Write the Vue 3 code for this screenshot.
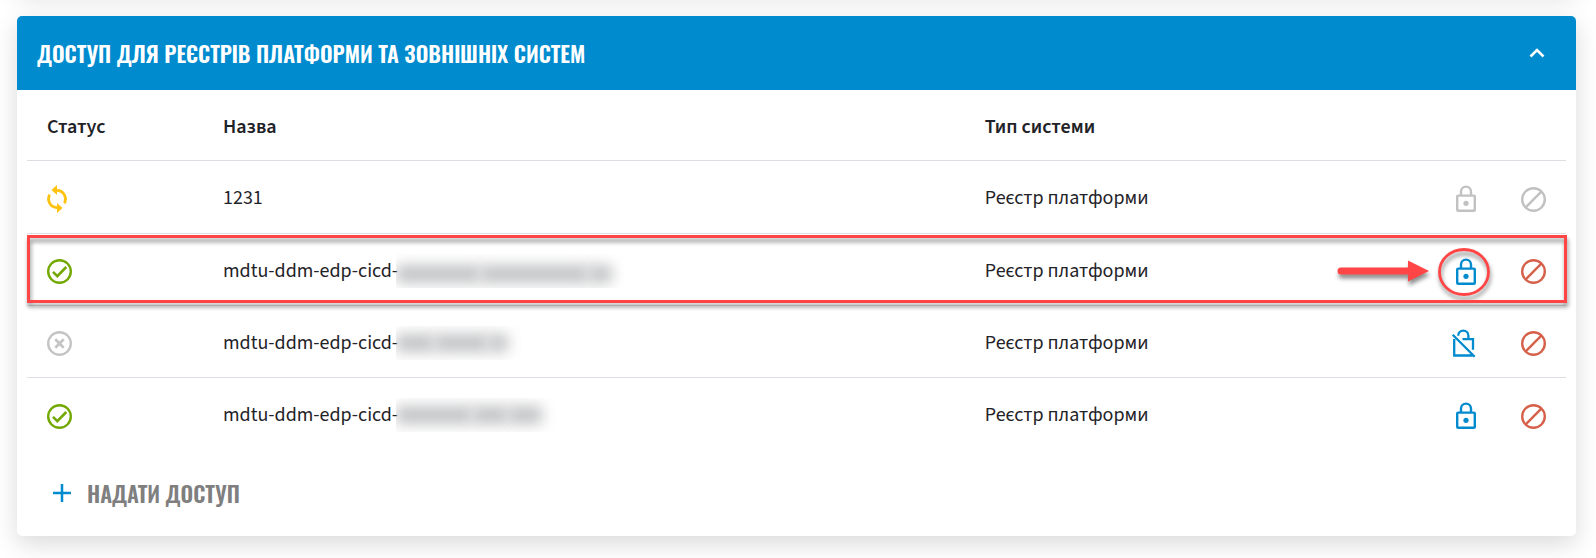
<script setup>
import { ref } from 'vue'

const open = ref(true)

const rows = [
  { status: 'sync', name: '1231', mask: '', type: 'Реєстр платформи', lock: 'closed', disabled: true, marked: false },
  { status: 'ok', name: 'mdtu-ddm-edp-cicd-', mask: 'long', type: 'Реєстр платформи', lock: 'closed', disabled: false, marked: true },
  { status: 'off', name: 'mdtu-ddm-edp-cicd-', mask: 'short', type: 'Реєстр платформи', lock: 'open', disabled: false, marked: false },
  { status: 'ok', name: 'mdtu-ddm-edp-cicd-', mask: 'medium', type: 'Реєстр платформи', lock: 'closed', disabled: false, marked: false }
]
const statusLabels = { sync: 'Оновлюється', ok: 'Активний', off: 'Вимкнений' }
</script>

<template>
  <main class="page">
    <div class="previous"></div>
    <section class="card">
      <header class="head">
        <h2>Доступ для реєстрів платформи та зовнішніх систем</h2>
        <button class="toggle" type="button" aria-label="Згорнути" :aria-expanded="open" @click="open = !open">
          <svg viewBox="0 0 16 10" width="16" height="10"><path d="M1.5 8.5 8 2l6.500 6.500" fill="none" stroke="#fff" stroke-width="2.600" /></svg>
        </button>
      </header>

      <div v-if="open" class="body">
        <table>
          <colgroup>
            <col class="c-status" /><col class="c-name" /><col class="c-type" /><col class="c-actions" />
          </colgroup>
          <thead>
            <tr>
              <th scope="col">Статус</th>
              <th scope="col">Назва</th>
              <th scope="col">Тип системи</th>
              <td></td>
            </tr>
          </thead>
          <tbody>
            <tr v-for="(row, i) in rows" :key="i">
              <td>
                <span class="status" role="img" :aria-label="statusLabels[row.status]">
                  <svg v-if="row.status === 'sync'" viewBox="2 1 20 28" width="20" height="28">
                    <path d="M12 5V1L6.500 6 12 11V7.800a7.100 7.100 0 0 1 6.200 10.400l2.100 2.100A10 10 0 0 0 12 5zM12 22.200a7.100 7.100 0 0 1-6.200-10.400L3.700 9.700A10 10 0 0 0 12 25v4l5.500-5-5.500-5z" fill="#ffc20e" />
                  </svg>
                  <svg v-else-if="row.status === 'ok'" viewBox="0 0 25 25" width="25" height="25" fill="none" stroke="#73a800">
                    <circle cx="12.500" cy="12.500" r="11.300" stroke-width="2.400" />
                    <path d="M6 12.800l4.300 4.300L19.300 8" stroke-width="2.600" />
                  </svg>
                  <svg v-else viewBox="0 0 25 25" width="25" height="25" fill="none" stroke="#c4c4c4">
                    <circle cx="12.500" cy="12.500" r="11.300" stroke-width="2.400" />
                    <path d="M8.300 8.300l8.400 8.400M16.700 8.300l-8.400 8.400" stroke-width="2.700" />
                  </svg>
                </span>
              </td>
              <td>
                <span class="name">{{ row.name }}<span v-if="row.mask" class="mask" :class="row.mask"><i></i><i></i><i></i></span></span>
              </td>
              <td>{{ row.type }}</td>
              <td>
                <span class="actions">
                  <button type="button" class="lock" :disabled="row.disabled" aria-label="Доступ">
                    <svg v-if="row.lock === 'closed'" viewBox="0 0 26 28" width="26" height="28" fill="none" stroke="currentColor" stroke-width="2.400">
                      <rect x="4.200" y="10.600" width="17.600" height="15.200" rx="1" />
                      <path d="M8 10.500V6.600a5 5 0 0 1 10 0v3.900" />
                      <circle cx="13" cy="18.300" r="2.600" fill="currentColor" stroke="none" />
                    </svg>
                    <svg v-else class="open-lock" viewBox="0 0 26 28" width="26" height="28" fill="none" stroke="currentColor" stroke-width="2.300">
                      <path d="M-.3 4.800l22 22M1.200 9v16.500h18.500M9.500 9.200H20v10.600M5.200 5.700a5.100 5.100 0 0 1 10.200 0v3.500" />
                    </svg>
                    <svg v-if="row.marked" class="ring" viewBox="0 0 52 48" width="52" height="48" fill="none" stroke="#ff4545" stroke-width="2.800">
                      <ellipse cx="26" cy="24" rx="24.500" ry="22.500" />
                    </svg>
                    <svg v-if="row.marked" class="arrow" viewBox="0 0 92 22" width="92" height="22" fill="#ff4545">
                      <path d="M4 7.500h67V.5L92 11 71 21.500v-7H4a3.500 3.500 0 0 1 0-7z" />
                    </svg>
                  </button>
                  <button type="button" class="ban" :disabled="row.disabled" aria-label="Заборонити">
                    <svg viewBox="0 0 25 25" width="25" height="25" fill="none" stroke="currentColor" stroke-width="2.400">
                      <circle cx="12.500" cy="12.500" r="11.300" />
                      <path d="M4.700 20.300 20.300 4.700" />
                    </svg>
                  </button>
                </span>
                <span v-if="row.marked" class="frame"></span>
              </td>
            </tr>
          </tbody>
        </table>
        <button class="add" type="button">
          <svg viewBox="0 0 18 18" width="18" height="18"><path d="M9 0v18M0 9h18" stroke="#008bcf" stroke-width="2.500" /></svg>
          <span>Надати доступ</span>
        </button>
      </div>
    </section>
  </main>
</template>

<style>
html { background: #fff; overflow: hidden; }
</style>

<style scoped>
.page {
  padding: 0 20px 22px 17px;
  overflow: hidden;
  color: #1f2328;
  font-family: "Source Sans Pro", "Source Sans 3", "Noto Sans", sans-serif;
  font-size: 20px;
  line-height: 28px;
}
.previous, .card { box-shadow: 0 8px 24px rgba(0, 0, 0, 0.15); border-radius: 5px; }
.previous { height: 32px; margin-top: -44px; margin-bottom: 28px; }
.card { position: relative; background: #fff; }
.head {
  display: flex;
  align-items: center;
  justify-content: space-between;
  height: 74px;
  padding: 0 28px 0 20px;
  box-sizing: border-box;
  border-radius: 5px 5px 0 0;
  background: #008bcf;
}
h2 {
  margin: 0;
  color: #fff;
  font-family: "Oswald", "Liberation Sans Narrow", sans-serif;
  font-size: 22px;
  font-weight: 600;
  text-transform: uppercase;
  white-space: nowrap;
}
button { padding: 0; border: 0; background: none; font: inherit; cursor: pointer; }
svg { display: block; }
.toggle { padding: 0 3px; }
.body { padding: 0 10px; }
table { width: 100%; table-layout: fixed; border-collapse: separate; border-spacing: 0; }
.c-status { width: 176px; }
.c-name { width: 49.5%; }
.c-actions { width: 260px; }
tr { position: relative; }
th, td { padding: 2px 20px 0; height: 72px; box-sizing: border-box; text-align: left; border-bottom: 1px solid #dddfe4; white-space: nowrap; }
thead th, thead td { height: 71px; padding-top: 4px; }
tbody tr:first-child td { height: 73px; }
th { font-weight: 600; }
tbody tr:last-child td { border-bottom: 0; }
.status { display: block; padding-top: 2px; }
.name { display: flex; align-items: center; height: 36px; }
.mask { display: flex; align-items: center; overflow: hidden; height: 34px; margin-left: -2px; }
.mask i { height: 18px; background: #c2c3c5; filter: blur(7px); }
.long { width: 228px; }
.long i { width: 84px; margin-top: 6px; }
.long i:nth-child(2) { width: 108px; }
.long i:nth-child(3) { width: 24px; }
.short { width: 128px; }
.short i { width: 38px; }
.short i:nth-child(2) { width: 54px; }
.short i:nth-child(3) { width: 20px; }
.medium { width: 162px; }
.medium i { width: 76px; }
.medium i:nth-child(2) { width: 36px; }
.medium i:nth-child(3) { width: 34px; }
.actions { display: flex; align-items: center; justify-content: flex-end; gap: 42px; padding-top: 2px; }
.lock { position: relative; color: #008bcf; }
.open-lock { overflow: visible; }
.ban { color: #d5614b; }
.actions button:disabled { color: #c1c1c1; cursor: default; }
.ring, .arrow, .frame { position: absolute; pointer-events: none; filter: drop-shadow(1px 4px 2px rgba(0, 0, 0, 0.45)); }
.ring { left: -15px; top: -10px; }
.arrow { right: 50px; top: 2px; }
.frame { inset: 1px -1px 3px 0; border: 3px solid #ff4545; }
.add {
  display: flex;
  align-items: center;
  gap: 16px;
  height: 86px;
  padding-left: 26px;
  color: #7f7f7f;
  font-family: "Oswald", "Liberation Sans Narrow", sans-serif;
  font-size: 22px;
  font-weight: 600;
  text-transform: uppercase;
}
</style>
